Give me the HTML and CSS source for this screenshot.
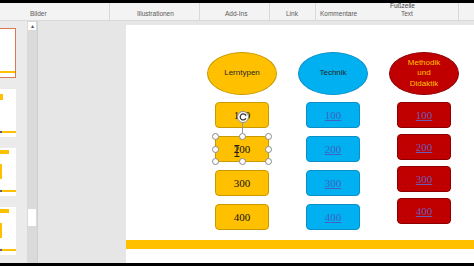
FILE: index.html
```html
<!DOCTYPE html>
<html lang="de">
<head>
    <meta charset="UTF-8">
    <meta name="viewport" content="width=device-width, initial-scale=1.0">
    <title>Quiz - PowerPoint</title>
    <link rel="stylesheet" href="styles.css">
</head>
<body>
    <!-- Window top edge -->
    <div class="topbar"></div>

    <!-- Ribbon (group labels only) -->
    <header class="ribbon">
        <div class="group g-bilder"><span class="group-label">Bilder</span></div>
        <div class="group g-illu"><span class="group-label">Illustrationen</span></div>
        <div class="group g-addins"><span class="group-label">Add-Ins</span></div>
        <div class="group g-link"><span class="group-label">Link</span></div>
        <div class="group g-komm"><span class="group-label">Kommentare</span></div>
        <div class="group g-text">
            <span class="ribbon-btn">Fußzeile</span>
            <span class="group-label">Text</span>
        </div>
        <div class="group g-rest"></div>
    </header>

    <!-- Workspace -->
    <div class="workspace">
        <!-- Slide thumbnails -->
        <aside class="thumbs">
            <div class="thumb selected">
                <span class="thumb-line"></span>
            </div>
            <div class="thumb">
                <span class="thumb-top short"></span>
                <span class="thumb-line"></span>
            </div>
            <div class="thumb">
                <span class="thumb-top"></span>
                <span class="thumb-side"></span>
                <span class="thumb-line"></span>
            </div>
            <div class="thumb">
                <span class="thumb-top"></span>
                <span class="thumb-side"></span>
                <span class="thumb-line"></span>
            </div>
        </aside>

        <div class="scrollbar">
            <span class="scroll-up">&#9652;</span>
            <span class="scroll-thumb"></span>
        </div>

        <!-- Editing area -->
        <main class="stage">
            <section class="slide">
                <div class="columns">
                    <div class="column col-yellow">
                        <div class="topic">Lerntypen</div>
                        <div class="card">100</div>
                        <div class="card selected-card">
                            200
                            <span class="rotate-line"></span>
                            <svg class="rotate-handle" width="12" height="12" viewBox="0 0 12 12">
                                <circle cx="6" cy="6" r="5.5" fill="#fff" stroke="#8c8c8c"/>
                                <path d="M8.6 4.2 A3 3 0 1 0 8.9 7.2" fill="none" stroke="#333" stroke-width="1.2"/>
                                <path d="M7.2 3.2 L9.4 3.4 L9 5.6 Z" fill="#333"/>
                            </svg>
                            <span class="handle h-tl"></span>
                            <span class="handle h-tm"></span>
                            <span class="handle h-tr"></span>
                            <span class="handle h-ml"></span>
                            <span class="handle h-mr"></span>
                            <span class="handle h-bl"></span>
                            <span class="handle h-bm"></span>
                            <span class="handle h-br"></span>
                            <svg class="ibeam" width="6" height="12" viewBox="0 0 6 12">
                                <path d="M0.5 0.5 H5.5 M3 0.5 V11.5 M0.5 11.5 H5.5 M1 7.5 H5" fill="none" stroke="#222" stroke-width="1"/>
                            </svg>
                        </div>
                        <div class="card">300</div>
                        <div class="card">400</div>
                    </div>

                    <div class="column col-blue">
                        <div class="topic">Technik</div>
                        <div class="card"><a href="#">100</a></div>
                        <div class="card"><a href="#">200</a></div>
                        <div class="card"><a href="#">300</a></div>
                        <div class="card"><a href="#">400</a></div>
                    </div>

                    <div class="column col-red">
                        <div class="topic">Methodik<br>und<br>Didaktik</div>
                        <div class="card"><a href="#">100</a></div>
                        <div class="card"><a href="#">200</a></div>
                        <div class="card"><a href="#">300</a></div>
                        <div class="card"><a href="#">400</a></div>
                    </div>
                </div>

                <div class="slide-bar"></div>
            </section>
        </main>
    </div>

    <div class="bottombar"></div>
</body>
</html>
```

FILE: styles.css
```css
/* Basic page */
* {
    box-sizing: border-box;
}

body {
    margin: 0;
    width: 474px;
    height: 266px;
    overflow: hidden;
    font-family: "Liberation Sans", Arial, sans-serif;
    background-color: #e6e6e6;
}

.topbar,
.bottombar {
    height: 3px;
    background-color: #000;
}

/* Ribbon */
.ribbon {
    display: flex;
    height: 18px;
    background-color: #f3f3f3;
    border-bottom: 1px solid #dadada;
}

.group {
    position: relative;
    display: flex;
    align-items: flex-end;
    padding-bottom: 3px;
    border-right: 1px solid #d9d9d9;
    font-size: 6.5px;
    color: #5a5a5a;
    white-space: nowrap;
}

.g-bilder { width: 110px; padding-left: 30px; }
.g-illu { width: 90px; padding-left: 27px; }
.g-addins { width: 70px; padding-left: 25px; }
.g-link { width: 46px; padding-left: 16px; }
.g-komm { width: 45px; padding-left: 4px; border-right: none; }
.g-text { width: 98px; padding-left: 40px; }
.g-rest { flex: 1; border-right: none; }

.ribbon-btn {
    position: absolute;
    top: 0;
    left: 29px;
    font-size: 6.5px;
    line-height: 6px;
    color: #444;
}

/* Workspace */
.workspace {
    display: flex;
    height: 242px;
}

.thumbs {
    width: 27px;
    padding-top: 7px;
    background-color: #ebebeb;
    display: flex;
    flex-direction: column;
    gap: 11px;
}

.thumb {
    width: 16px;
    height: 48px;
    background-color: #fff;
    display: flex;
    flex-direction: column;
}

.thumb.selected {
    height: 50px;
    border: 1px solid #d9794f;
    border-left: none;
}

.thumb-top {
    width: 9px;
    height: 4px;
    margin-top: 2px;
    background-color: #ffc000;
}

.thumb-top.short {
    width: 3px;
    height: 6px;
    margin-top: 5px;
}

.thumb-side {
    width: 2px;
    height: 15px;
    margin-top: 10px;
    background-color: #ffc000;
}

.thumb-line {
    height: 2px;
    margin-top: auto;
    margin-bottom: 4px;
    background: linear-gradient(to right, #666 2px, #ffc000 2px);
}

.thumb.selected .thumb-line {
    background: #ffc000;
}

.scrollbar {
    width: 11px;
    background-color: #dadada;
    border-right: 1px solid #cfcfcf;
    display: flex;
    flex-direction: column;
    align-items: center;
}

.scroll-up {
    width: 8px;
    height: 8px;
    margin-top: 1px;
    background-color: #fff;
    font-size: 6px;
    line-height: 8px;
    text-align: center;
    color: #555;
}

.scroll-thumb {
    width: 8px;
    height: 17px;
    margin-top: 179px;
    background-color: #fff;
}

.stage {
    flex: 1;
    display: flex;
    padding: 4px 0 0 88px;
    background-color: #e6e6e6;
}

/* Slide */
.slide {
    flex: 1;
    display: flex;
    flex-direction: column;
    padding-top: 27px;
    background-color: #fff;
}

.columns {
    display: flex;
    gap: 21px;
    padding-left: 81px;
}

.column {
    width: 70px;
    display: flex;
    flex-direction: column;
    align-items: center;
    gap: 8px;
}

.topic {
    width: 70px;
    height: 43px;
    margin-bottom: -1px;
    border-radius: 50%;
    border: 1px solid;
    display: flex;
    align-items: center;
    justify-content: center;
    text-align: center;
    font-size: 8px;
    line-height: 10.5px;
    color: #262626;
}

.card {
    position: relative;
    width: 54px;
    height: 26px;
    border-radius: 4px;
    border: 1px solid;
    display: flex;
    align-items: center;
    justify-content: center;
    font-family: "Liberation Serif", "Times New Roman", serif;
    font-size: 11px;
    color: #111;
}

.card a {
    text-decoration: underline;
}

.col-yellow .topic,
.col-yellow .card {
    background-color: #ffc000;
    border-color: #c99a00;
}

.col-blue .topic,
.col-blue .card {
    background-color: #00b0f0;
    border-color: #0a90c6;
}

.col-blue .card a {
    color: #3f63c4;
}

.col-red {
    gap: 6px;
}

.col-red .topic {
    margin-bottom: 1px;
    color: #ffc000;
}

.col-red .topic,
.col-red .card {
    background-color: #c00000;
    border-color: #8e0000;
}

.col-red .card a {
    color: #6b5bb8;
}

.slide-bar {
    height: 9px;
    margin-top: auto;
    margin-bottom: 14px;
    background-color: #ffc000;
}

/* Selection overlay on the 200 card */
.handle {
    position: absolute;
    width: 7px;
    height: 7px;
    border-radius: 50%;
    border: 1px solid #8a8a8a;
    background-color: #fff;
}

.h-tl { left: -4px; top: -4px; }
.h-tm { left: 23px; top: -4px; }
.h-tr { right: -4px; top: -4px; }
.h-ml { left: -4px; top: 9px; }
.h-mr { right: -4px; top: 9px; }
.h-bl { left: -4px; bottom: -4px; }
.h-bm { left: 23px; bottom: -4px; }
.h-br { right: -4px; bottom: -4px; }

.rotate-line {
    position: absolute;
    left: 26px;
    top: -14px;
    width: 1px;
    height: 10px;
    background-color: #9a9a9a;
}

.rotate-handle {
    position: absolute;
    left: 21px;
    top: -26px;
}

.ibeam {
    position: absolute;
    left: 18px;
    top: 8px;
}
```
